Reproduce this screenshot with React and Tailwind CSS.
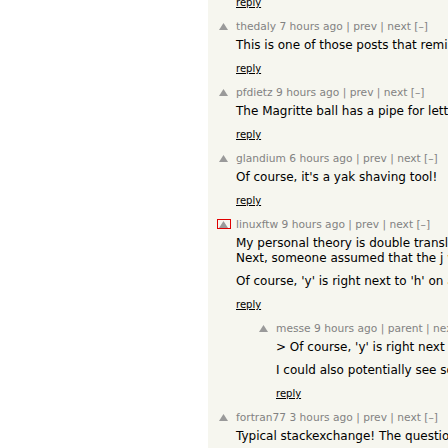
const comments = [
  {
    user: "thedaly",
    age: "7 hours ago",
    nav: "prev",
    paras: [["This is one of those posts that reminds me why I keep reading this site."]],
  },
  {
    user: "pfdietz",
    age: "9 hours ago",
    nav: "prev",
    paras: [["The Magritte ball has a pipe for letters."]],
  },
  {
    user: "glandium",
    age: "6 hours ago",
    nav: "prev",
    paras: [["Of course, it's a yak shaving tool!"]],
  },
  {
    user: "linuxftw",
    age: "9 hours ago",
    nav: "prev",
    focused: true,
    paras: [
      [
        "My personal theory is double translation, from English to another language and back.",
        "Next, someone assumed that the j was a typo and corrected it.",
      ],
      ["Of course, 'y' is right next to 'h' on a qwerty keyboard."],
    ],
  },
  {
    user: "messe",
    age: "9 hours ago",
    nav: "parent",
    indent: true,
    paras: [
      ["> Of course, 'y' is right next to 'h' on a qwerty keyboard."],
      ["I could also potentially see some autocorrect at play here."],
    ],
  },
  {
    user: "fortran77",
    age: "3 hours ago",
    nav: "prev",
    paras: [["Typical stackexchange! The question gets closed as off topic."]],
  },
];

function VoteArrow({ focused }) {
  return (
    <div
      className={
        focused
          ? "flex h-[10px] w-[14px] items-center justify-center border border-[#e00000]"
          : "flex h-[10px] w-[14px] items-center justify-center border border-transparent"
      }
    >
      <svg width="9" height="7" viewBox="0 0 9 7">
        <polygon points="4.5,0 9,7 0,7" fill="#9a9a9a" />
      </svg>
    </div>
  );
}

function Reply() {
  return (
    <div className="mt-2 text-[10px] leading-[15px] text-black underline">reply</div>
  );
}

function Comment({ c }) {
  return (
    <div className={c.indent ? "flex pl-[40px] pb-[9px]" : "flex pb-[9px]"}>
      <div className="flex w-[28px] shrink-0 justify-center pt-[2px] pl-[3px]">
        <VoteArrow focused={c.focused} />
      </div>
      <div className="flex shrink-0 flex-col">
        <div className="text-[10.67px] leading-[15px] text-[#828282]">
          {c.user} {c.age} | {c.nav} | next [–]
        </div>
        <div className="mt-1 flex flex-col gap-2 text-[12px] leading-[15px] text-black">
          {c.paras.map((p, i) => (
            <div key={i}>
              {p.map((line, j) => (
                <div key={j}>{line}</div>
              ))}
            </div>
          ))}
        </div>
        <Reply />
      </div>
    </div>
  );
}

export default function App() {
  return (
    <div className="flex h-[448px] w-[448px] overflow-hidden bg-white font-['DejaVu_Sans',sans-serif]">
      <div className="w-[208px] shrink-0 bg-white" />
      <div className="flex-1 overflow-hidden bg-[#f6f6ef] whitespace-nowrap">
        <div className="-mt-[13px] pl-[28px] pb-[9px]">
          <Reply />
        </div>
        {comments.map((c) => (
          <Comment key={c.user} c={c} />
        ))}
      </div>
    </div>
  );
}
